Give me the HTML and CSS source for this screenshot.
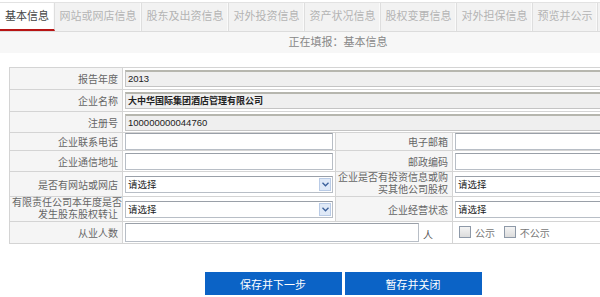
FILE: index.html
```html
<!DOCTYPE html>
<html lang="zh-CN">
<head>
    <meta charset="UTF-8">
    <title>年度报告填报 - 基本信息</title>
    <link rel="stylesheet" href="styles.css">
</head>
<body>
<div class="page">

    <!-- Tabs -->
    <div class="tabs">
        <span class="tab active">基本信息</span>
        <span class="tab">网站或网店信息</span>
        <span class="tab">股东及出资信息</span>
        <span class="tab">对外投资信息</span>
        <span class="tab">资产状况信息</span>
        <span class="tab">股权变更信息</span>
        <span class="tab">对外担保信息</span>
        <span class="tab">预览并公示</span>
    </div>
    <div class="status">正在填报：基本信息</div>

    <!-- Form -->
    <table class="form-table">
        <colgroup>
            <col class="c1"><col class="c2"><col class="c3"><col class="c4">
        </colgroup>
        <tr class="r22">
            <td class="label">报告年度</td>
            <td colspan="3"><div class="field readonly">2013</div></td>
        </tr>
        <tr class="r22">
            <td class="label">企业名称</td>
            <td colspan="3"><div class="field readonly name">大中华国际集团酒店管理有限公司</div></td>
        </tr>
        <tr class="r21">
            <td class="label">注册号</td>
            <td colspan="3"><div class="field readonly">100000000044760</div></td>
        </tr>
        <tr class="r18">
            <td class="label">企业联系电话</td>
            <td><div class="field"></div></td>
            <td class="label">电子邮箱</td>
            <td><div class="field"></div></td>
        </tr>
        <tr class="r21">
            <td class="label">企业通信地址</td>
            <td><div class="field"></div></td>
            <td class="label">邮政编码</td>
            <td><div class="field"></div></td>
        </tr>
        <tr class="r23">
            <td class="label">是否有网站或网店</td>
            <td><div class="field select">请选择<span class="arrow"><svg width="7" height="5" viewBox="0 0 7 5"><path d="M0.5 0.8 L3.5 3.8 L6.5 0.8" fill="none" stroke="#3a5f9a" stroke-width="1.3"/></svg></span></div></td>
            <td class="label two"><span class="line">企业是否有投资信息或购</span><span class="line">买其他公司股权</span></td>
            <td><div class="field select">请选择</div></td>
        </tr>
        <tr class="r25">
            <td class="label two"><span class="line">有限责任公司本年度是否</span><span class="line">发生股东股权转让</span></td>
            <td><div class="field select">请选择<span class="arrow"><svg width="7" height="5" viewBox="0 0 7 5"><path d="M0.5 0.8 L3.5 3.8 L6.5 0.8" fill="none" stroke="#3a5f9a" stroke-width="1.3"/></svg></span></div></td>
            <td class="label">企业经营状态</td>
            <td><div class="field select">请选择</div></td>
        </tr>
        <tr class="r22">
            <td class="label">从业人数</td>
            <td colspan="2">
                <div class="count-row">
                    <div class="field count"></div>
                    <span class="unit">人</span>
                </div>
            </td>
            <td>
                <label class="check"><span class="box"></span>公示</label>
                <label class="check"><span class="box"></span>不公示</label>
            </td>
        </tr>
    </table>

    <div class="buttons">
        <button class="btn">保存并下一步</button>
        <button class="btn">暂存并关闭</button>
    </div>

</div>
</body>
</html>
```

FILE: styles.css
```css
/* General Reset */
* {
    margin: 0;
    padding: 0;
    box-sizing: border-box;
}

body {
    background: #fff;
    font-family: "Liberation Sans", "Noto Sans CJK SC", sans-serif;
    color: #333;
    overflow: hidden;
}

.page {
    width: 676px;
}

/* Tabs */
.tabs {
    display: flex;
    margin-top: 2px;
    height: 30px;
    background: #f2f2f2;
    border-top: 1px solid #e2e2e2;
    border-bottom: 1px solid #dcdcdc;
}

.tab {
    padding: 0 4.5px;
    font-size: 11px;
    line-height: 27px;
    color: #b4b4b4;
    border-right: 1px solid #dedede;
    box-shadow: inset -1px 0 0 #fafafa;
    white-space: nowrap;
}

.tab.active {
    padding: 0 5px;
    background: #fff;
    color: #444;
    border-bottom: 2px solid #b81414;
}

.status {
    height: 21px;
    line-height: 21px;
    background: #f7f7f7;
    text-align: center;
    font-size: 11px;
    color: #888;
}

/* Form table */
.form-table {
    width: 658px;
    margin: 14px 0 0 9px;
    border-collapse: collapse;
    table-layout: fixed;
    font-size: 10px;
}

.c1 { width: 113px; }
.c2 { width: 213px; }
.c3 { width: 117px; }

.form-table td {
    border: 1px solid #d4d4d4;
    padding: 0 2px;
    vertical-align: middle;
}

.form-table .label {
    background: #f5f5f5;
    color: #666;
    text-align: right;
    padding-right: 4px;
    white-space: nowrap;
}

.form-table .label.two .line {
    display: block;
    height: 12px;
    line-height: 12px;
}

.r18 { height: 18px; }
.r21 { height: 21px; }
.r22 { height: 22px; }
.r23 { height: 23px; }
.r25 { height: 25px; }

.field {
    height: 17px;
    border: 1px solid #b8bec6;
    border-top-color: #9aa0a8;
    background: #fff;
    font-size: 9.5px;
    line-height: 15px;
    padding-left: 2px;
    color: #222;
}

.field.readonly {
    background: #efefef;
    border-color: #c4c4c4;
    border-top: 2px solid #b6b6ae;
    line-height: 14px;
}

.field.name {
    font-weight: bold;
    font-size: 9px;
}

.field.select {
    display: flex;
    justify-content: space-between;
    align-items: center;
    padding-right: 1px;
}

.arrow {
    width: 12px;
    height: 13px;
    background: #dfe9f7;
    border: 1px solid #b9cbe6;
    display: flex;
    align-items: center;
    justify-content: center;
}

.count-row {
    display: flex;
    align-items: flex-end;
}

.count {
    width: 294px;
    height: 19px;
}

.unit {
    margin-left: 4px;
    font-size: 10px;
    color: #555;
}

.check {
    display: inline-flex;
    align-items: center;
    margin-left: 4px;
    margin-right: 2px;
    color: #777;
    font-size: 10px;
}

.check .box {
    width: 12px;
    height: 12px;
    border: 1px solid #8e99a8;
    background: linear-gradient(#f4f4f4, #dcdcdc);
    margin-right: 4px;
}

/* Buttons */
.buttons {
    display: flex;
    justify-content: center;
    gap: 3px;
    margin-top: 28px;
    padding-left: 10px;
}

.btn {
    width: 137px;
    height: 23px;
    background: #0b63c6;
    color: #fff;
    border: none;
    font-family: "Liberation Sans", "Noto Sans CJK SC", sans-serif;
    font-size: 11px;
    cursor: pointer;
}
```
